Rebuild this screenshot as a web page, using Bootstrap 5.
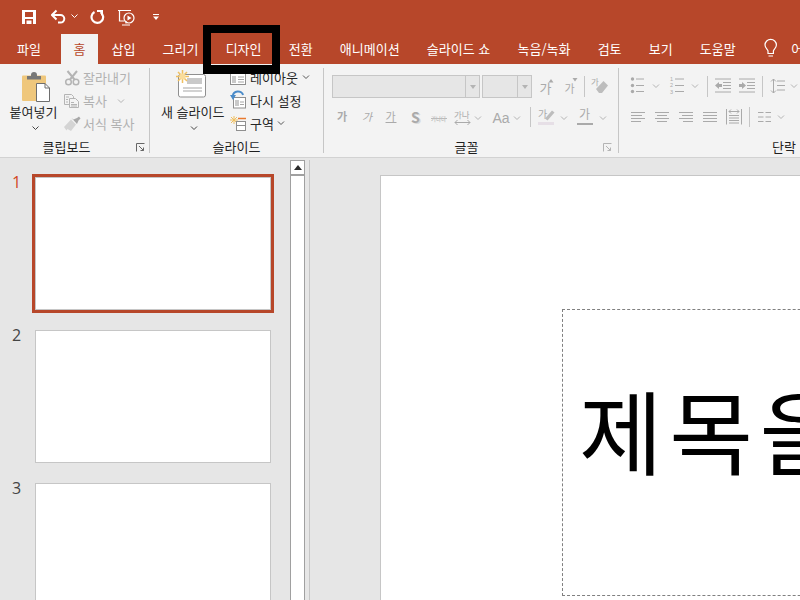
<!doctype html>
<html lang="ko">
<head>
<meta charset="utf-8">
<title>PowerPoint</title>
<link href="https://cdn.jsdelivr.net/npm/bootstrap@5.3.0/dist/css/bootstrap.min.css" rel="stylesheet">
<style>
html,body{width:800px;height:600px;overflow:hidden;margin:0}
body{font-family:"Noto Sans CJK KR","Liberation Sans",sans-serif;font-size:13px;line-height:1;background:#e6e6e6;color:#262626;position:relative}
svg{display:block;flex:none}
svg text{font-family:"Noto Sans CJK KR",sans-serif;fill:#aaa}
svg text.digit{font-family:"Liberation Sans",sans-serif}
.app-head{background:#b7472a;height:64px;width:800px}
.qat{height:34px;padding-left:22px}
.tabs{height:30px;padding-left:3.5px;flex-wrap:nowrap;white-space:nowrap}
.tabs .nav-link{color:#fff;padding:0 13.6px;height:30px;line-height:30px;font-size:13px}
.tabs .first{margin-right:6.3px}
.tabs .nav-link.active{background:#f3f3f3;color:#b7472a;padding:0 12.5px}
.tell{color:#fff;line-height:30px}
.ribbon{background:#f3f3f3;height:94px;padding-top:4px;border-bottom:1px solid #d2d2d2;width:800px;overflow:hidden}
.rgroup{height:85px;border-right:1px solid #c6c6c6;flex:none}
.g-clip{width:150px}.g-slide{width:174px}.g-font{width:295px;padding-left:7px}.g-para{width:322px;padding-left:8px;border-right:0}
.rbody{height:71px;margin-top:-1px;flex:none}
.rlabel{height:18px;line-height:18px;color:#1f1f1f;align-items:center;flex:none}
.rlabel span{flex:1;text-align:center}
.launch{width:16px}
.big{text-align:center;white-space:nowrap}
.paste{width:67px;margin-right:-3px}
.newslide{width:63px;margin-left:11px;margin-right:6px}
.big-label{height:16px;line-height:16px;margin-top:-1px;margin-bottom:1px}
.rows{margin-top:-1px}
.rb{height:23px;display:flex;align-items:center;white-space:nowrap}
.rb svg{margin-top:2px}
.off{color:#b1b1b1}
.frow{height:31px;display:flex;align-items:center}
.frow-top{margin-top:4px}
.combo{height:23px;background:#e6e6e6;border:1px solid #c6c6c6;display:flex;justify-content:flex-end}
.combo-a{width:148px;margin-left:1px;margin-right:2px}
.combo-b{width:50px}
.combo i{display:flex;width:14px;border-left:1px solid #c6c6c6;align-items:center;justify-content:center}
.combo i::after{content:"";border:3px solid transparent;border-top:4px solid #b4b4b4;border-bottom:0}
.workspace{height:442px;width:800px}
.thumbs{width:290px;padding-top:19px;flex:none}
.thumb-row{height:133px;margin-bottom:20px;flex:none}
.thumb-no{width:35px;padding-left:12px;font-family:"Open Sans",sans-serif;font-size:16px;line-height:20px;color:#444;margin-top:-5px}
.thumb{width:236px;height:133px;background:#fff;border:1px solid #c6c6c6}
.thumb.sel{outline:3px solid #b7472a}
.sel-no{color:#d24726}
.sbar{width:15px;margin-top:2px;background:#fff;border-left:1px solid #a0a0a0;border-right:1px solid #a0a0a0;flex:none}
.sbar-up{height:16px;border-top:1px solid #a0a0a0;border-bottom:2px solid #a0a0a0;display:flex;align-items:center;justify-content:center}
.sbar-up::after{content:"";border:4px solid transparent;border-bottom:5px solid #2b2b2b;border-top:0}
.divider{width:1px;margin:2px 0 0 4px;background:#c6c6c6;flex:none}
.stage{padding:17px 0 0 70px;flex:none}
.slide{width:900px;height:520px;background:#fff;border:1px solid #c6c6c6;padding:133px 0 0 181px}
.title-box{width:700px;height:287px;border:1px dashed #808080;padding:48px 0 0 16px;font-size:91px;letter-spacing:6.5px;line-height:140px;color:#000;white-space:nowrap;overflow:hidden}
.callout{position:absolute;left:203px;top:25px;width:77px;height:49px;border:8px solid #000;border-bottom-width:9px}
</style>
</head>
<body>
<svg width="0" height="0" class="position-absolute"><defs>
<path id="c" fill="none" d="M-3-1.5 0 1.5 3-1.5"/>
<path id="lnch" fill="none" d="M.5 8.5V.5H8.5M3 3 7.500 7.500M7.500 4.500V7.500H4.500"/>
</defs></svg>

<header class="app-head">
  <div class="qat d-flex">
    <svg width="29" height="34" viewBox="22 0 29 34" aria-label="저장"><path fill="#fff" fill-rule="evenodd" d="M22 10h14v14H22zM25 12v5h8v-5zM25 19v5h1.500v-3.500h5V24H33v-5z"/></svg>
    <svg width="39" height="34" viewBox="51 0 39 34" aria-label="실행 취소"><path fill="none" stroke="#fff" stroke-width="2" d="M56.500 10.500 52 15l4.500 4.500M52 15h8.500a3.800 3.800 0 0 1 0 7.600H58"/><use href="#c" x="74.500" y="16" stroke="#fff"/></svg>
    <svg width="28" height="34" viewBox="90 0 28 34" aria-label="반복"><path fill="none" stroke="#fff" stroke-width="2.200" d="M94.500 12a5.800 5.800 0 1 0 6 .2"/><path fill="#fff" d="M97 10h6v6.500l-2-1.500v-3h-4z"/></svg>
    <svg width="34" height="34" viewBox="118 0 34 34" aria-label="슬라이드 쇼"><path fill="none" stroke="#fff" stroke-width="1.200" d="M118 10.500h13M119.500 11v10h5M126 21v2.500M122 25h8"/><circle cx="129" cy="18" r="5" fill="none" stroke="#fff" stroke-width="1.200"/><path fill="#fff" d="M127.500 15.500v5l4-2.500z"/></svg>
    <svg width="8" height="34" viewBox="152 0 8 34" aria-label="사용자 지정"><path fill="#fff" d="M153 14h6v1h-6zM153 16.500h6L156 20z"/></svg>
  </div>
  <ul class="nav tabs">
    <li class="nav-item first"><a class="nav-link" href="#">파일</a></li>
    <li class="nav-item"><a class="nav-link active" href="#">홈</a></li>
    <li class="nav-item"><a class="nav-link" href="#">삽입</a></li>
    <li class="nav-item"><a class="nav-link" href="#">그리기</a></li>
    <li class="nav-item"><a class="nav-link" href="#">디자인</a></li>
    <li class="nav-item"><a class="nav-link" href="#">전환</a></li>
    <li class="nav-item"><a class="nav-link" href="#">애니메이션</a></li>
    <li class="nav-item"><a class="nav-link" href="#">슬라이드 쇼</a></li>
    <li class="nav-item"><a class="nav-link" href="#">녹음/녹화</a></li>
    <li class="nav-item"><a class="nav-link" href="#">검토</a></li>
    <li class="nav-item"><a class="nav-link" href="#">보기</a></li>
    <li class="nav-item"><a class="nav-link" href="#">도움말</a></li>
    <li class="nav-item d-flex">
      <svg width="42" height="30" viewBox="750 34 42 30" aria-label="전구"><path fill="none" stroke="#fff" stroke-width="1.200" d="M769 53.500v-2.500c0-1.500-3-3-3-6a5.700 5.700 0 0 1 11.400 0c0 3-3 4.500-3 6v2.500zM769.500 56h4.500"/></svg>
      <span class="tell">어떤 작업을 원하시나요?</span>
    </li>
  </ul>
</header>

<section class="ribbon d-flex">
  <div class="rgroup g-clip d-flex flex-column">
    <div class="rbody d-flex">
      <div class="big paste">
        <svg width="67" height="38" viewBox="0 67 67 38"><rect x="22" y="75.500" width="24" height="25.500" rx="1" fill="#efc77c"/><path fill="#777" d="M27 76h14v3.500H27zM31 75a3 3 0 0 1 6 0v1h-6z"/><path fill="#fff" stroke="#6e6e6e" d="M36.500 83.500H45l4.500 4.500v13.500h-13z"/><path fill="none" stroke="#6e6e6e" d="M45 83.500V88h4.500"/></svg>
        <div class="big-label">붙여넣기</div>
        <svg width="67" height="16" viewBox="0 120 67 16"><use href="#c" x="35.500" y="127" stroke="#444"/></svg>
      </div>
      <div class="rows">
        <div class="rb off"><svg width="19" height="23" viewBox="64 67 19 23"><g fill="none" stroke="#b4b4b4" stroke-width="1.500"><circle cx="68.500" cy="82" r="2.800"/><circle cx="76" cy="82" r="2.800"/><path stroke-width="2" d="M70 79.500 77 71M74.500 79.500 67.500 71"/></g></svg>잘라내기</div>
        <div class="rb off"><svg width="19" height="23" viewBox="64 90 19 23"><g fill="#f3f3f3" stroke="#b4b4b4"><path d="M64.500 94.500h7l2 2v8h-9z"/><path d="M69.500 98.500h6l3 3v6h-9z"/><path fill="none" d="M66 97h3M66 99.500h2M66 102h2M71 102.500h3M71 104.500h6M71 106h6"/></g></svg>복사<svg width="28" height="23" viewBox="107 90 28 23"><use href="#c" x="121" y="101" stroke="#b4b4b4"/></svg></div>
        <div class="rb off"><svg width="19" height="23" viewBox="64 113 19 23"><path fill="#d4d4d4" d="M64 127l7-7.500 5 5-5 6.500-3.500-2-1 1.500z"/><path fill="#a8a8a8" d="M71.500 118l2 1.500 3.500-1.500 2-1.500 1.500 2-2 2-1.500 3.500z"/></svg>서식 복사</div>
      </div>
    </div>
    <div class="rlabel d-flex"><span>클립보드</span><svg class="launch" width="16" height="9" viewBox="-3 0 16 9"><use href="#lnch" stroke="#666"/></svg></div>
  </div>

  <div class="rgroup g-slide d-flex flex-column">
    <div class="rbody d-flex">
      <div class="big newslide">
        <svg width="63" height="38" viewBox="161 67 63 38"><rect x="178.500" y="74.500" width="27" height="22.500" rx="2" fill="#fff" stroke="#8f8f8f"/><path fill="#c9c9c9" d="M187 78h15v6h-15z"/><path stroke="#a5a5a5" d="M183 88h19M183 91h19"/><g stroke="#f0c060" stroke-width="1.500"><path d="M182.500 70v13M176 76.500h13M178 72l9 9M187 72l-9 9"/></g><circle cx="182.500" cy="76.500" r="3" fill="#f9dc9a"/></svg>
        <div class="big-label">새 슬라이드</div>
        <svg width="63" height="16" viewBox="161 120 63 16"><use href="#c" x="194" y="127" stroke="#444"/></svg>
      </div>
      <div class="rows">
        <div class="rb"><svg width="20" height="23" viewBox="230 67 20 23"><rect x="230.500" y="71.500" width="15" height="13" fill="#fff" stroke="#8f8f8f"/><path fill="#c9c9c9" d="M232 76h4v7h-4z"/><path stroke="#a5a5a5" d="M238 77h6M238 79.500h6M238 82h6"/></svg>레이아웃<svg width="16" height="23" viewBox="297 67 16 23"><use href="#c" x="305" y="77" stroke="#555"/></svg></div>
        <div class="rb"><svg width="20" height="23" viewBox="230 90 20 23"><rect x="233.500" y="97.500" width="12" height="10.500" fill="#fff" stroke="#8f8f8f"/><path fill="#c9c9c9" d="M235 100h4v6h-4z"/><path stroke="#a5a5a5" d="M240 102h4M240 104.500h4"/><path fill="none" stroke="#4a8bc9" stroke-width="2" d="M233 96a5 4 0 0 1 10-1"/><path fill="#4a8bc9" d="M230 95h6l-3 5z"/></svg>다시 설정</div>
        <div class="rb"><svg width="20" height="23" viewBox="230 113 20 23"><g stroke="#f0c060"><path d="M234 116v8M230 120h8M231 117l6 6M237 117l-6 6"/></g><path fill="none" stroke="#e8792e" stroke-width="1.500" d="M238 118.500h8"/><rect x="236.500" y="121.500" width="9" height="9" fill="#fff" stroke="#8f8f8f"/><path stroke="#8f8f8f" d="M237 125.500h8"/></svg>구역<svg width="14" height="23" viewBox="274 113 14 23"><use href="#c" x="281" y="123" stroke="#555"/></svg></div>
      </div>
    </div>
    <div class="rlabel d-flex"><span>슬라이드</span></div>
  </div>

  <div class="rgroup g-font d-flex flex-column">
    <div class="rbody">
      <div class="frow frow-top">
        <div class="combo combo-a"><i></i></div>
        <div class="combo combo-b"><i></i></div>
        <svg width="24" height="31" viewBox="532 71 24 31"><text x="539.500" y="93" font-size="13">가</text><path fill="#aaa" d="M548.500 82.500 551 79l2.500 3.500z"/></svg>
        <svg width="28" height="31" viewBox="556 71 28 31"><text x="564.500" y="93" font-size="11">가</text><path fill="#aaa" d="M572.500 78h5l-2.500 3.500z"/></svg>
        <svg width="26" height="31" viewBox="584 71 26 31"><path stroke="#c6c6c6" d="M584.500 76v21"/><text x="591" y="85" font-size="8.500">가</text><path fill="#bdbdbd" d="M596 89l7.500-8 4.500 4.500-6 7.500h-3z"/></svg>
      </div>
      <div class="frow">
        <svg width="24" height="31" viewBox="331 102 24 31"><text x="337" y="121" font-size="11" font-weight="700">가</text></svg>
        <svg width="25" height="31" viewBox="355 102 25 31"><text x="362" y="121" font-size="11" font-style="italic">가</text></svg>
        <svg width="21" height="31" viewBox="380 102 21 31"><text x="385.500" y="121" font-size="11">가</text><path stroke="#aaa" d="M385.500 122.500h11"/></svg>
        <svg width="30" height="31" viewBox="401 102 30 31"><text x="412.500" y="124" font-size="14" font-weight="700" fill-opacity=".35">S</text><text x="411" y="122.500" font-size="14" font-weight="700">S</text></svg>
        <svg width="17" height="31" viewBox="431 102 17 31"><text x="431" y="121" font-size="5.500">가나다</text><path stroke="#bbb" d="M431 118.500h16"/></svg>
        <svg width="37" height="31" viewBox="448 102 37 31"><text x="454" y="118" font-size="8.500">가나</text><path fill="none" stroke="#aaa" d="M455 122.500h15M457.500 120l-2.500 2.500 2.500 2.500M467.500 120l2.500 2.500-2.500 2.500"/><use href="#c" x="478" y="118" stroke="#b4b4b4"/></svg>
        <svg width="40" height="31" viewBox="485 102 40 31"><text class="digit" x="492.500" y="122.500" font-size="14">Aa</text><use href="#c" x="517" y="118" stroke="#b4b4b4"/></svg>
        <svg width="10" height="31" viewBox="525 102 10 31"><path stroke="#c6c6c6" d="M530.500 107v20"/></svg>
        <svg width="35" height="31" viewBox="535 102 35 31"><text x="538" y="118" font-size="10">가</text><path fill="#bdbdbd" d="M545 118.500l7-8 2.500 2-7 8z"/><path fill="#e6dfe6" d="M538 122h16v3h-16z"/><use href="#c" x="564" y="118" stroke="#b4b4b4"/></svg>
        <svg width="40" height="31" viewBox="570 102 40 31"><text x="579" y="119" font-size="12">가</text><path fill="#aaa" d="M577 123h16v2h-16z"/><use href="#c" x="603" y="118" stroke="#b4b4b4"/></svg>
      </div>
    </div>
    <div class="rlabel d-flex"><span>글꼴</span><svg class="launch" width="16" height="9" viewBox="-1 0 16 9"><use href="#lnch" stroke="#b4b4b4"/></svg></div>
  </div>

  <div class="rgroup g-para d-flex flex-column">
    <div class="rbody">
      <div class="frow frow-top">
        <svg width="37" height="31" viewBox="627 71 37 31"><g fill="#aaa"><circle cx="632.500" cy="79" r="1.700"/><circle cx="632.500" cy="85.500" r="1.700"/><circle cx="632.500" cy="91.500" r="1.700"/></g><path stroke="#aaa" d="M636 79h8M636 85.500h8M636 91.500h8"/><use href="#c" x="656" y="86" stroke="#b4b4b4"/></svg>
        <svg width="38" height="31" viewBox="664 71 38 31"><text class="digit" x="670" y="80.500" font-size="5.500">1</text><text class="digit" x="670" y="87" font-size="5.500">2</text><text class="digit" x="670" y="93.500" font-size="5.500">3</text><path stroke="#aaa" d="M675 79h9M675 85.500h9M675 91.500h9"/><use href="#c" x="695" y="86" stroke="#b4b4b4"/></svg>
        <svg width="10" height="31" viewBox="702 71 10 31"><path stroke="#c6c6c6" d="M707.500 76v21"/></svg>
        <svg width="23" height="31" viewBox="712 71 23 31"><path stroke="#aaa" d="M715 79h16M723 82.500h8M723 85.500h8M723 88.500h8M715 92h16"/><path fill="#aaa" d="M715 85.500l4-3.500v2h3v3h-3v2z"/></svg>
        <svg width="23" height="31" viewBox="735 71 23 31"><path stroke="#aaa" d="M739 79h16M747 82.500h8M747 85.500h8M747 88.500h8M739 92h16"/><path fill="#aaa" d="M746 85.500l-4-3.500v2h-3v3h3v2z"/></svg>
        <svg width="8" height="31" viewBox="758 71 8 31"><path stroke="#c6c6c6" d="M762.500 76v21"/></svg>
        <svg width="34" height="31" viewBox="766 71 34 31"><path fill="none" stroke="#aaa" d="M773.500 79v14M771 81.500l2.500-2.500 2.500 2.500M771 90.500l2.500 2.500 2.500-2.500M777 81h8M777 85.500h8M777 90h8"/><use href="#c" x="794" y="86" stroke="#b4b4b4"/></svg>
      </div>
      <div class="frow">
        <svg width="23" height="31" viewBox="627 102 23 31"><path stroke="#aaa" d="M631 112.500h14M631 115.500h11M631 118.500h14M631 121.500h10"/></svg>
        <svg width="24" height="31" viewBox="650 102 24 31"><path stroke="#aaa" d="M655 112.500h14M657 115.500h10M655 118.500h14M657 121.500h10"/></svg>
        <svg width="24" height="31" viewBox="674 102 24 31"><path stroke="#aaa" d="M679 112.500h14M682 115.500h11M679 118.500h14M683 121.500h10"/></svg>
        <svg width="24" height="31" viewBox="698 102 24 31"><path stroke="#aaa" d="M703 112.500h14M703 115.500h14M703 118.500h14M703 121.500h14"/></svg>
        <svg width="23" height="31" viewBox="722 102 23 31"><path fill="none" stroke="#aaa" d="M726.500 109v15.500M741.500 109v15.500M729 111.500h10M731 109.500l-2 2 2 2M737 109.500l2 2-2 2M729 115.500h10M729 118h10M729 120.500h10M729 123h10"/></svg>
        <svg width="9" height="31" viewBox="745 102 9 31"><path stroke="#c6c6c6" d="M749.500 107v20"/></svg>
        <svg width="36" height="31" viewBox="754 102 36 31"><path stroke="#aaa" d="M758 112.500h5.500M765.500 112.500h5.500M758 117h5.500M765.500 117h5.500M758 121.500h5.500M765.500 121.500h5.500"/><use href="#c" x="781" y="117" stroke="#b4b4b4"/></svg>
      </div>
    </div>
    <div class="rlabel d-flex"><span>단락</span><span class="launch flex-grow-0"></span></div>
  </div>
</section>

<main class="workspace d-flex overflow-hidden">
  <div class="thumbs">
    <div class="thumb-row d-flex"><div class="thumb-no sel-no">1</div><div class="thumb sel"></div></div>
    <div class="thumb-row d-flex"><div class="thumb-no">2</div><div class="thumb"></div></div>
    <div class="thumb-row d-flex"><div class="thumb-no">3</div><div class="thumb"></div></div>
  </div>
  <div class="sbar"><div class="sbar-up"></div></div>
  <div class="divider"></div>
  <div class="stage">
    <div class="slide"><div class="title-box">제목을 입력하십시오</div></div>
  </div>
</main>

<div class="callout"></div>
<script src="https://cdn.jsdelivr.net/npm/bootstrap@5.3.0/dist/js/bootstrap.bundle.min.js"></script>
</body>
</html>
